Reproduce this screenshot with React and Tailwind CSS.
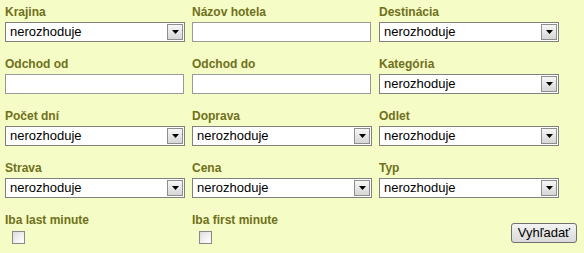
import React from "react";

const font = { fontFamily: '"Liberation Sans", Arial, sans-serif' };

function Label({ children }) {
  return (
    <div className="h-[14px] leading-[14px] text-[12px] font-bold text-[#6f7020] whitespace-nowrap">
      {children}
    </div>
  );
}

function Select({ value = "nerozhoduje" }) {
  return (
    <div className="mt-[3px] h-[20px] w-[180px] border border-[#7f7f7f] bg-white flex items-center justify-between pl-[4px] pr-[1px]">
      <span className="text-[13px] leading-[16px] text-black">{value}</span>
      <div className="h-[16px] w-[16px] border border-[#8e8e8e] bg-gradient-to-b from-[#f7f7f7] to-[#d6d6d6] flex items-center justify-center">
        <svg width="7" height="4" viewBox="0 0 7 4">
          <path d="M0 0h7L3.5 4z" fill="#000" />
        </svg>
      </div>
    </div>
  );
}

function TextInput() {
  return <div className="mt-[3px] h-[20px] w-[179px] border border-[#9a9a9a] bg-white" />;
}

function Checkbox() {
  return (
    <div className="mt-[4px] ml-[7px] h-[13px] w-[13px] border border-[#8a8a8a] bg-gradient-to-br from-[#dcdcdc] to-[#fbfbfb] p-[1px]">
      <div className="h-full w-full bg-gradient-to-br from-[#e2e2e2] to-[#ffffff]" />
    </div>
  );
}

function Field({ label, children }) {
  return (
    <div className="flex flex-col">
      <Label>{label}</Label>
      {children}
    </div>
  );
}

export default function App() {
  return (
    <div className="w-[584px] h-[253px] bg-[#f5fcc5] pl-[5px] pt-[5px]" style={font}>
      <div className="grid grid-cols-[187px_187px_198px] gap-y-[15px]">
        <Field label="Krajina"><Select /></Field>
        <Field label="Názov hotela"><TextInput /></Field>
        <Field label="Destinácia"><Select /></Field>

        <Field label="Odchod od"><TextInput /></Field>
        <Field label="Odchod do"><TextInput /></Field>
        <Field label="Kategória"><Select /></Field>

        <Field label="Počet dní"><Select /></Field>
        <Field label="Doprava"><Select /></Field>
        <Field label="Odlet"><Select /></Field>

        <Field label="Strava"><Select /></Field>
        <Field label="Cena"><Select /></Field>
        <Field label="Typ"><Select /></Field>

        <Field label="Iba last minute"><Checkbox /></Field>
        <Field label="Iba first minute"><Checkbox /></Field>
        <div className="flex justify-end items-start pt-[10px]">
          <button className="h-[20px] px-[6px] border border-[#707070] rounded-[3px] bg-gradient-to-b from-[#f3f3f3] to-[#d9d9d9] text-[13px] leading-[16px] text-black">
            Vyhľadať
          </button>
        </div>
      </div>
    </div>
  );
}
